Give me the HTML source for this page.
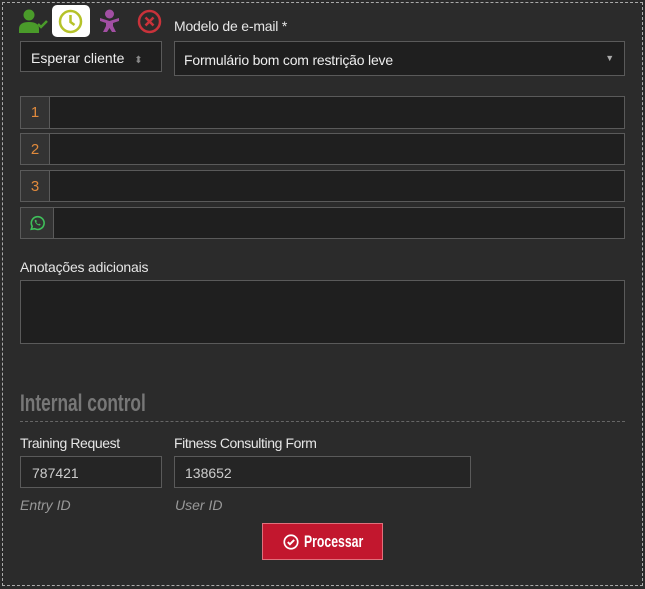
<!DOCTYPE html>
<html><head><meta charset="utf-8"><style>
*{box-sizing:border-box;margin:0;padding:0}
body{width:645px;height:589px;background:#2b2b2b;font-family:"Liberation Sans",sans-serif;color:#ddd;position:relative;overflow:hidden;font-size:14px}
.a{position:absolute}
.outer{left:2px;top:2px;width:641px;height:584px;border:1px dashed #aaa}
.inp{background:#1f1f1f;border:1px solid #5a5a5a}
.add{background:#333;border:1px solid #5a5a5a;color:#e08a3c;font-size:15px;display:flex;align-items:center;justify-content:center}
.lbl{color:#e6e6e6;font-size:14px;letter-spacing:-.2px}
.it{font-style:italic;color:#999;font-size:14px}
</style></head><body>
<div class="a outer"></div>
<svg class="a" style="left:19px;top:9px" width="30" height="24" viewBox="0 0 30 24"><circle cx="10" cy="6" r="5.5" fill="#4a9b2a"/><path d="M0 24v-4c0-5 4-7 10-7s10 2 10 7v4z" fill="#4a9b2a"/><path d="M19 15l3 3 6-6" stroke="#4a9b2a" stroke-width="2.5" fill="none"/></svg>
<div class="a" style="left:52px;top:5px;width:38px;height:32px;background:#fff;border-radius:5px"></div>
<svg class="a" style="left:58px;top:9px" width="25" height="25" viewBox="0 0 25 25"><circle cx="12.5" cy="12.5" r="10.5" stroke="#b5c229" stroke-width="2.5" fill="none"/><path d="M12.5 6v7l4 3" stroke="#b5c229" stroke-width="2.5" fill="none"/></svg>
<svg class="a" style="left:97px;top:9px" width="25" height="25" viewBox="0 0 25 25"><circle cx="12.5" cy="5" r="4.5" fill="#a24fa3"/><path d="M3 9l9.5 3 9.5-3v3l-6 2v3l3 6h-4l-2.5-4-2.5 4h-4l3-6v-3l-6-2z" fill="#a24fa3"/></svg>
<svg class="a" style="left:137px;top:9px" width="25" height="25" viewBox="0 0 25 25"><circle cx="12.5" cy="12.5" r="10.5" stroke="#c9323a" stroke-width="2.5" fill="none"/><path d="M8.5 8.5l8 8M16.5 8.5l-8 8" stroke="#c9323a" stroke-width="2.5"/></svg>
<div class="a lbl" style="left:174px;top:18px">Modelo de e-mail *</div>
<div class="a inp" style="left:20px;top:41px;width:142px;height:31px;color:#eee;padding:8px 10px">Esperar cliente <span style="color:#888;font-size:10px;margin-left:6px">⬍</span></div>
<div class="a inp" style="left:174px;top:41px;width:451px;height:35px;color:#eee;padding:10px 9px;letter-spacing:-.2px">Formulário bom com restrição leve<span style="position:absolute;right:10px;top:11px;color:#aaa;font-size:9px">▼</span></div>
<div class="a add" style="left:20px;top:96px;width:30px;height:33px">1</div><div class="a inp" style="left:49px;top:96px;width:576px;height:33px"></div>
<div class="a add" style="left:20px;top:133px;width:30px;height:32px">2</div><div class="a inp" style="left:49px;top:133px;width:576px;height:32px"></div>
<div class="a add" style="left:20px;top:170px;width:30px;height:32px">3</div><div class="a inp" style="left:49px;top:170px;width:576px;height:32px"></div>
<div class="a add" style="left:20px;top:207px;width:34px;height:32px"><svg width="16" height="16" viewBox="0 0 14 14"><path d="M2 12.5l.8-2.6A5.6 5.6 0 1 1 5 12z" stroke="#3fbf5a" stroke-width="1.4" fill="none"/><path d="M5 4.5c0 2.5 2 4.5 4.5 4.7l.7-1-1.3-.7-.6.6c-.9-.4-1.6-1.1-2-2l.6-.6-.7-1.3z" fill="#3fbf5a"/></svg></div><div class="a inp" style="left:53px;top:207px;width:572px;height:32px"></div>
<div class="a lbl" style="left:20px;top:259px">Anotações adicionais</div>
<div class="a inp" style="left:20px;top:280px;width:605px;height:64px"></div>
<div class="a" style="left:20px;top:390px;font-size:24px;font-weight:bold;color:#777;transform:scaleX(.72);transform-origin:left">Internal control</div>
<div class="a" style="left:20px;top:421px;width:605px;border-top:1px dashed #666"></div>
<div class="a lbl" style="left:20px;top:435px;letter-spacing:-.4px">Training Request</div>
<div class="a lbl" style="left:174px;top:435px;letter-spacing:-.4px">Fitness Consulting Form</div>
<div class="a inp" style="left:20px;top:456px;width:142px;height:32px;background:#252525;padding:8px 11px;color:#ccc">787421</div>
<div class="a inp" style="left:174px;top:456px;width:297px;height:32px;background:#252525;padding:8px 10px;color:#ccc">138652</div>
<div class="a it" style="left:20px;top:497px">Entry ID</div>
<div class="a it" style="left:175px;top:497px">User ID</div>
<div class="a" style="left:262px;top:523px;width:121px;height:37px;background:#c2172e;border:1px solid #e0707c;color:#fff;font-weight:bold;font-size:17px;display:flex;align-items:center;justify-content:center"><svg width="16" height="16" viewBox="0 0 15 15" style="margin-right:5px"><circle cx="7.5" cy="7.5" r="6.3" stroke="#fff" stroke-width="1.6" fill="none"/><path d="M4.5 7.6l2 2 4-4" stroke="#fff" stroke-width="1.8" fill="none"/></svg><span style="display:inline-block;transform:scaleX(.72);transform-origin:left;width:58px;white-space:nowrap">Processar</span></div>
</body></html>
